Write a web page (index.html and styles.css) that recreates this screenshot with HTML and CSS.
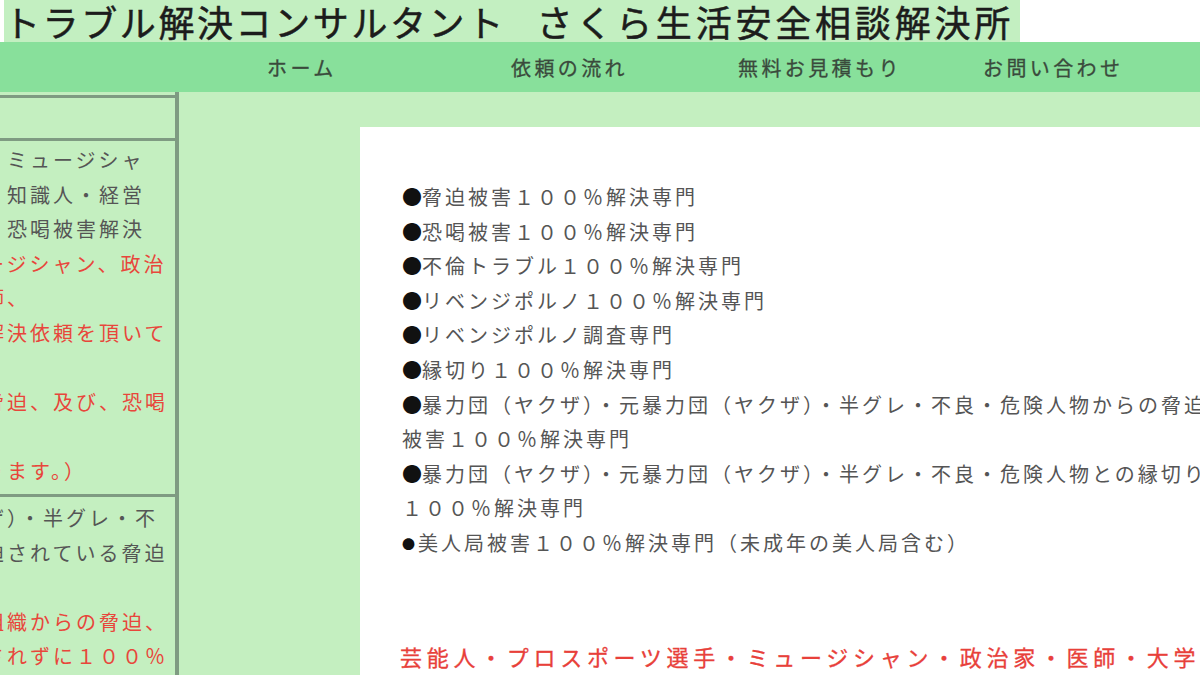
FILE: index.html
```html
<!DOCTYPE html>
<html lang="ja">
<head>
<meta charset="utf-8">
<title>トラブル解決コンサルタント さくら生活安全相談解決所</title>
<link rel="stylesheet" href="styles.css">
</head>
<body>
<header class="title-bar">
  <h1 class="site-title">トラブル解決コンサルタント <span class="site-title-name">さくら生活安全相談解決所</span></h1>
</header>
<nav class="global-nav">
  <a class="nav-item" href="#">ホーム</a>
  <a class="nav-item" href="#">依頼の流れ</a>
  <a class="nav-item" href="#">無料お見積もり</a>
  <a class="nav-item" href="#">お問い合わせ</a>
</nav>
<div class="page">
  <aside class="side">
    <div class="side-head"></div>
    <div class="side-block side-block-first">
      <p class="side-line">・ミュージシャ</p>
      <p class="side-line">・知識人・経営</p>
      <p class="side-line">・恐喝被害解決</p>
      <p class="side-line side-red">ージシャン、政治</p>
      <p class="side-line side-red">師、</p>
      <p class="side-line side-red">解決依頼を頂いて</p>
      <p class="side-line">&nbsp;</p>
      <p class="side-line side-red">脅迫、及び、恐喝</p>
      <p class="side-line">&nbsp;</p>
      <p class="side-line side-red">ります。）</p>
    </div>
    <div class="side-block side-block-second">
      <p class="side-line">ザ）・半グレ・不</p>
      <p class="side-line">迫されている脅迫</p>
      <p class="side-line">&nbsp;</p>
      <p class="side-line side-red">組織からの脅迫、</p>
      <p class="side-line side-red">されずに１００％</p>
    </div>
  </aside>
  <main class="content">
    <ul class="service-list">
      <li><span class="dot">●</span>脅迫被害１００％解決専門</li>
      <li><span class="dot">●</span>恐喝被害１００％解決専門</li>
      <li><span class="dot">●</span>不倫トラブル１００％解決専門</li>
      <li><span class="dot">●</span>リベンジポルノ１００％解決専門</li>
      <li><span class="dot">●</span>リベンジポルノ調査専門</li>
      <li><span class="dot">●</span>縁切り１００％解決専門</li>
      <li><span class="dot">●</span>暴力団（ヤクザ）・元暴力団（ヤクザ）・半グレ・不良・危険人物からの脅迫</li>
      <li>被害１００％解決専門</li>
      <li><span class="dot">●</span>暴力団（ヤクザ）・元暴力団（ヤクザ）・半グレ・不良・危険人物との縁切り</li>
      <li>１００％解決専門</li>
      <li><span class="dot dot-small">●</span>美人局被害１００％解決専門（未成年の美人局含む）</li>
    </ul>
    <p class="lead-red">芸能人・プロスポーツ選手・ミュージシャン・政治家・医師・大学教授・知識人</p>
  </main>
</div>
</body>
</html>
```
FILE: styles.css
```css
html, body {
  margin: 0;
  padding: 0;
}

body {
  width: 1200px;
  height: 675px;
  overflow: hidden;
  background: #c4efc0;
  font-family: "Noto Sans CJK JP", "Noto Sans", sans-serif;
  color: #555;
}

.title-bar {
  height: 42px;
  background: #ffffff;
  padding-left: 8px;
  display: flex;
}

.site-title {
  margin: 0 0 0 -4px;
  padding: 0 6px 0 0;
  background: #c3efc1;
  color: #1c1c1c;
  font-size: 36px;
  font-weight: normal;
  letter-spacing: 2.6px;
  word-spacing: 20px;
  line-height: 42px;
  white-space: nowrap;
  -webkit-text-stroke: 0.5px #1c1c1c;
}

.site-title-name {
  letter-spacing: 3.8px;
}

.global-nav {
  height: 50px;
  background: #88e09b;
  display: grid;
  grid-template-columns: 244px 227px 245px 1fr;
  padding-left: 267px;
  align-items: center;
}

.nav-item {
  color: #3a4a3c;
  text-decoration: none;
  font-size: 20px;
  letter-spacing: 3.4px;
  white-space: nowrap;
  -webkit-text-stroke: 0.3px #3a4a3c;
}

.page {
  display: flex;
  height: 583px;
}

.side {
  width: 175px;
  flex: none;
  border-right: 4px solid #7f9b82;
  overflow: hidden;
}

.side-head {
  margin-top: 3px;
  height: 40px;
  border-top: 3px solid #7f9b82;
  border-bottom: 3px solid #7f9b82;
}

.side-block {
  border-bottom: 3px solid #7f9b82;
}

.side-block-first {
  padding: 2px 0 5px;
}

.side-block-second {
  padding: 4px 0 0;
  border-bottom: none;
}

.side-line {
  margin: 0 0 0 -16px;
  white-space: nowrap;
  font-size: 20px;
  letter-spacing: 3px;
  line-height: 34.6px;
  color: #555;
}

.side-red {
  color: #e8463b;
}

.content {
  flex: 1;
  margin: 35px 0 0 181px;
  background: #ffffff;
  padding: 53px 0 0 42px;
  overflow: hidden;
}

.service-list {
  list-style: none;
  margin: 0;
  padding: 0;
}

.service-list li {
  white-space: nowrap;
  font-size: 20px;
  letter-spacing: 3px;
  line-height: 34.6px;
  color: #555;
}

.dot {
  color: #111;
  letter-spacing: 0;
}

.dot-small {
  font-size: 13px;
  letter-spacing: 3px;
  vertical-align: 2px;
}

.lead-red {
  margin: 76px 0 0 -2px;
  white-space: nowrap;
  font-size: 22px;
  letter-spacing: 4.7px;
  line-height: 36px;
  color: #e8403a;
  -webkit-text-stroke: 0.3px #e8403a;
}
```
